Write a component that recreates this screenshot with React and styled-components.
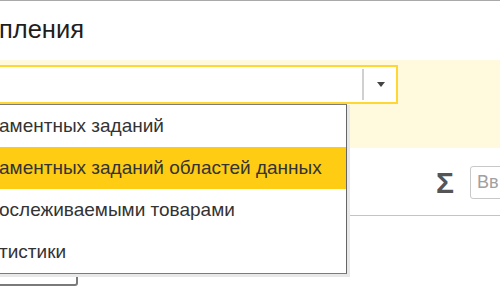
import React from "react";
import styled, { createGlobalStyle } from "styled-components";

const Global = createGlobalStyle`
  html, body { margin: 0; padding: 0; background: #fff; }
  body { font-family: "Liberation Sans", Arial, sans-serif; overflow: hidden; }
`;

const Page = styled.div`
  position: relative;
  width: 500px;
  height: 300px;
  overflow: hidden;
  background: #fff;
  display: flex;
  flex-direction: column;
`;

const TopRule = styled.div`
  height: 1px;
  background: #a9a9a9;
  flex: none;
`;

const Header = styled.div`
  height: 59px;
  flex: none;
  display: flex;
  align-items: flex-start;
`;

const Title = styled.h1`
  margin: 13px 0 0 -1px;
  font-size: 25.5px;
  font-weight: normal;
  color: #1e1e1e;
  line-height: 30px;
  white-space: nowrap;
`;

const FormBand = styled.div`
  flex: none;
  height: 88px;
  background: #fffadd;
  padding-top: 5px;
  box-sizing: border-box;
`;

const Combo = styled.div`
  margin-left: -20px;
  width: 418px;
  height: 39px;
  box-sizing: border-box;
  border: 2px solid #ffd633;
  background: #fff;
  display: flex;
  align-items: stretch;
`;

const ComboText = styled.div`
  flex: 1;
`;

const ComboButton = styled.div`
  width: 32px;
  display: flex;
  align-items: center;
  justify-content: center;
  margin: 2px 0;
  border-left: 2px solid #d0d0d0;
`;

const Arrow = styled.div`
  width: 0;
  height: 0;
  border-left: 4px solid transparent;
  border-right: 4px solid transparent;
  border-top: 5px solid #444;
  margin-left: 1px;
`;

const Content = styled.div`
  flex: 1;
  display: flex;
  flex-direction: column;
`;

const Toolbar = styled.div`
  height: 68px;
  flex: none;
  display: flex;
  align-items: center;
  justify-content: flex-end;
  gap: 16px;
  border-bottom: 1px solid #c4c4c4;
  box-sizing: border-box;
  padding-top: 2px;
`;

const Sigma = styled.span`
  font-size: 30px;
  font-weight: bold;
  color: #555;
  line-height: 1;
  font-family: "Liberation Sans", Arial, sans-serif;
`;

const Search = styled.div`
  width: 60px;
  height: 33px;
  margin-right: -30px;
  box-sizing: border-box;
  border: 1px solid #c8c8c8;
  border-radius: 3px;
  display: flex;
  align-items: center;
  padding-left: 6px;
  font-size: 18px;
  color: #a0a0a0;
`;

const BottomButton = styled.div`
  margin-top: 44px;
  margin-left: -20px;
  width: 98px;
  height: 26px;
  box-sizing: border-box;
  border: 2px solid #7a7a7a;
  border-radius: 3px;
  background: #fff;
`;

const DropList = styled.ul`
  position: absolute;
  left: -30px;
  top: 104px;
  width: 377px;
  margin: 0;
  padding: 0;
  list-style: none;
  background: #fff;
  border: 1px solid #7c7c7c;
  border-right-color: #666;
  box-shadow: 2px 2px 0 1px #e8e8e8;
  box-sizing: border-box;
`;

const Item = styled.li`
  height: 42px;
  display: flex;
  align-items: center;
  padding-left: 28px;
  font-size: 19px;
  color: #333;
  white-space: nowrap;
  background: ${(p) => (p.$active ? "#ffcc14" : "transparent")};
`;

const items = [
  "аментных заданий",
  "аментных заданий областей данных",
  "ослеживаемыми товарами",
  "тистики",
];

export default function App() {
  return (
    <>
      <Global />
      <Page>
        <TopRule />
        <Header>
          <Title>пления</Title>
        </Header>
        <FormBand>
          <Combo>
            <ComboText />
            <ComboButton>
              <Arrow />
            </ComboButton>
          </Combo>
        </FormBand>
        <Content>
          <Toolbar>
            <Sigma>Σ</Sigma>
            <Search>Вв</Search>
          </Toolbar>
          <BottomButton />
        </Content>
        <DropList>
          {items.map((t, i) => (
            <Item key={i} $active={i === 1}>
              {t}
            </Item>
          ))}
        </DropList>
      </Page>
    </>
  );
}
